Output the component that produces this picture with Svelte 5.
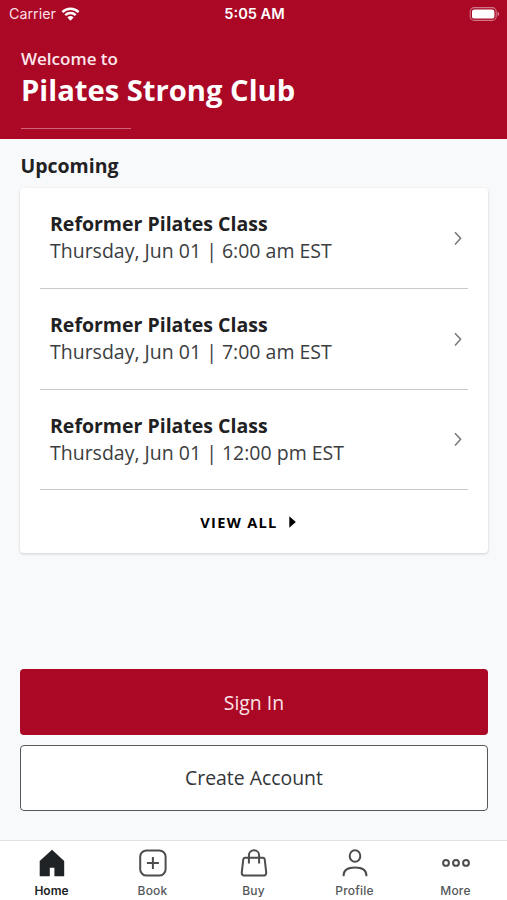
<script>
  const classes = [
    { name: 'Reformer Pilates Class', time: 'Thursday, Jun 01 | 6:00 am EST' },
    { name: 'Reformer Pilates Class', time: 'Thursday, Jun 01 | 7:00 am EST' },
    { name: 'Reformer Pilates Class', time: 'Thursday, Jun 01 | 12:00 pm EST' },
  ]

  const tabs = ['Home', 'Book', 'Buy', 'Profile', 'More']
  let active = 'Home'
</script>

<div class="screen">
  <header>
    <div class="status">
      <div class="carrier">
        <span>Carrier</span>
        <svg width="19" height="14" viewBox="0 0 18 14" fill="none" stroke="#fff" stroke-width="2.4">
          <path d="M.9 5.1a11.5 11.5 0 0 1 16.2 0M3.8 8.2a7.4 7.4 0 0 1 10.4 0" />
          <path d="M9 13.8 5.9 10.4a4.5 4.5 0 0 1 6.2 0Z" fill="#fff" stroke="none" />
        </svg>
      </div>
      <span class="clock">5:05 AM</span>
      <svg class="battery" width="31" height="14" viewBox="0 0 31 14">
        <rect x="1.2" y=".6" width="26" height="12.8" rx="4" fill="none" stroke="#fff" stroke-opacity=".45" stroke-width="1.1" />
        <rect x="3" y="2.4" width="22.4" height="9.2" rx="2.2" fill="#fff" />
        <path d="M28.6 4.8c2 .6 2 3.8 0 4.4Z" fill="#fff" fill-opacity=".5" />
      </svg>
    </div>
    <p class="welcome">Welcome to</p>
    <h1>Pilates Strong Club</h1>
    <div class="rule"></div>
  </header>

  <main>
    <h2>Upcoming</h2>
    <section class="card">
      {#each classes as item}
        <div class="row">
          <div class="info">
            <strong>{item.name}</strong>
            <span>{item.time}</span>
          </div>
          <svg class="chevron" width="8" height="14" viewBox="0 0 8 14" fill="none" stroke="#777" stroke-width="1.5">
            <path d="M1 1.2 6.6 7.3 1 13.4" />
          </svg>
        </div>
      {/each}
      <button class="all" type="button">
        <span>VIEW ALL</span>
        <svg width="7" height="12" viewBox="0 0 7 12"><path d="M.3.2 6.8 6 .3 11.8Z" fill="#000" /></svg>
      </button>
    </section>

    <div class="actions">
      <button class="sign-in" type="button">Sign In</button>
      <button class="create" type="button">Create Account</button>
    </div>
  </main>

  <nav>
    {#each tabs as tab}
      <button class="tab" class:active={tab === active} type="button" on:click={() => (active = tab)}>
        <svg width="28" height="28" viewBox="0 0 28 28" fill="none" stroke="#4b4d4f" stroke-width="2">
          {#if tab === 'Home'}
            <path d="M14 .7 26.2 12v15.2h-9.8v-8.5h-4.6v8.5H1.7V12Z" fill="#202325" stroke="none" />
          {:else if tab === 'Book'}
            <rect x="1.2" y="1.4" width="25.4" height="25.2" rx="6.4" />
            <path d="M13.9 8v12M7.9 14h12" />
          {:else if tab === 'Buy'}
            <path d="M5 8.8h18c1 0 1.5.5 1.7 1.4l1.5 13.2c.2 2-.9 3.2-2.8 3.2H4.6c-1.9 0-3-1.2-2.8-3.2l1.5-13.2C3.5 9.3 4 8.8 5 8.8Z" />
            <path d="M8.9 14.5V6.3a5.1 5.1 0 0 1 10.2 0v8.2" />
          {:else if tab === 'Profile'}
            <ellipse cx="14" cy="7" rx="5.3" ry="5.8" />
            <path d="M2.6 27.3v-1C2.6 21 6.3 18.4 14 18.4s11.4 2.6 11.4 7.9v1" />
          {:else}
            <circle cx="4" cy="13.9" r="2.9" />
            <circle cx="14" cy="13.9" r="2.9" />
            <circle cx="24" cy="13.9" r="2.9" />
          {/if}
        </svg>
        <span>{tab}</span>
      </button>
    {/each}
  </nav>
</div>

<style>
  :global(body) {
    background: #f8f9fb;
  }
  .screen {
    box-sizing: border-box;
    height: 900px;
    display: flex;
    flex-direction: column;
    background: #f8f9fb;
    color: #1f2123;
    font-family: 'Open Sans', 'Noto Sans', sans-serif;
  }
  button {
    font: inherit;
    color: inherit;
    border: 0;
    margin: 0;
    padding: 0;
    cursor: pointer;
  }
  header {
    box-sizing: border-box;
    height: 139px;
    padding: 0 21px;
    background: #ab0826;
    color: #fff;
  }
  .status {
    display: grid;
    grid-template-columns: 1fr auto 1fr;
    align-items: center;
    height: 27px;
    margin: 0 -14px 0 -12px;
    font-family: Inter, sans-serif;
    font-size: 14.3px;
  }
  .carrier {
    display: flex;
    align-items: center;
    gap: 5px;
    color: #fbdfe4;
  }
  .clock {
    font-weight: 600;
    font-size: 14.6px;
  }
  .battery {
    justify-self: end;
  }
  .welcome {
    margin: 20px 0 0;
    font-size: 17px;
    font-weight: 600;
    line-height: 24px;
    color: #fde6ea;
  }
  h1 {
    margin: 0;
    font-size: 29.2px;
    font-weight: 700;
    line-height: 38px;
  }
  .rule {
    width: 110px;
    height: 1px;
    margin-top: 19px;
    background: #cf6378;
  }
  main {
    flex: 1;
    display: flex;
    flex-direction: column;
    padding: 0 19.5px 29.5px 20.4px;
  }
  h2 {
    margin: 12px 0 8px;
    font-size: 19.5px;
    font-weight: 700;
    line-height: 29px;
  }
  .card {
    box-sizing: border-box;
    height: 365px;
    padding: 0 20px;
    display: flex;
    flex-direction: column;
    background: #fff;
    border-radius: 4px;
    box-shadow: 0 1px 3px rgba(0, 0, 0, 0.17);
  }
  .row {
    box-sizing: border-box;
    height: 100.8px;
    display: flex;
    align-items: center;
    justify-content: space-between;
    padding: 0 6px 0 9.6px;
    border-bottom: 1px solid #c9c9c9;
  }
  .info {
    display: flex;
    flex-direction: column;
    padding-bottom: 1.6px;
    font-size: 19.5px;
    line-height: 27px;
  }
  .info span {
    color: #3b3d3f;
  }
  .all {
    flex: 1;
    display: flex;
    align-items: center;
    justify-content: center;
    gap: 11px;
    padding: 0 12px 0 0;
    background: none;
    color: #000;
    font-size: 14.6px;
    font-weight: 700;
    letter-spacing: 1.3px;
  }
  .actions {
    display: flex;
    flex-direction: column;
    gap: 9.5px;
    margin-top: auto;
  }
  .actions button {
    box-sizing: border-box;
    height: 65.8px;
    border-radius: 4px;
    font-size: 19.4px;
  }
  .actions .sign-in {
    background: #ab0826;
    color: #fce3e8;
  }
  .actions .create {
    background: #fff;
    border: 1.5px solid #55585a;
    color: #333537;
  }
  nav {
    box-sizing: border-box;
    height: 60px;
    display: grid;
    grid-template-columns: repeat(5, 1fr);
    padding: 0 1px;
    background: #fff;
    border-top: 1px solid #dfe1e3;
  }
  .tab {
    display: flex;
    flex-direction: column;
    align-items: center;
    padding-top: 8px;
    background: none;
    color: #55585a;
    font-family: Inter, sans-serif;
    font-size: 12px;
    font-weight: 500;
    line-height: 16px;
    letter-spacing: 0.2px;
  }
  .tab span {
    margin-top: 6px;
  }
  .tab.active {
    color: #202325;
    font-weight: 600;
    letter-spacing: 0;
  }
</style>
